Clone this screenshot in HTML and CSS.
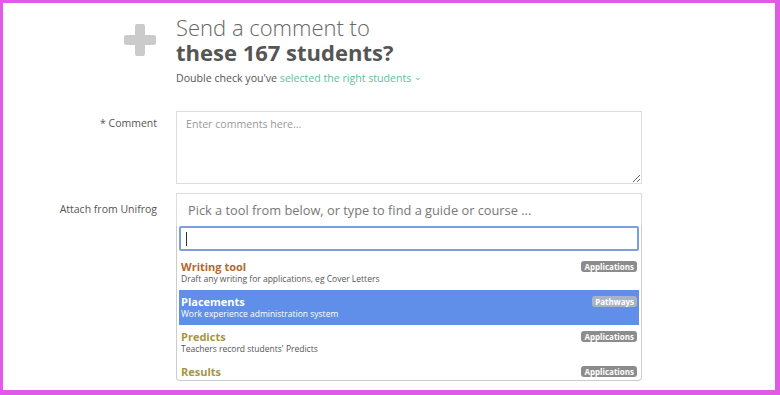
FILE: index.html
```html
<!DOCTYPE html>
<html>
<head>
<meta charset="utf-8">
<link rel="stylesheet" href="styles.css">
</head>
<body>
<div class="frame">
  <div class="page">
    <div class="row header">
      <div class="label icon-cell">
        <svg class="plus" width="32" height="32" viewBox="0 0 32 32"><path d="M16 3v26M3 16h26" stroke="#cbcbcb" stroke-width="10" stroke-linecap="round"/></svg>
      </div>
      <div class="field">
        <h1 class="title"><span class="light">Send a comment to</span><br><strong>these 167 students?</strong></h1>
        <p class="sub">Double check you've <a class="link">selected the right students <span class="caret">&#8964;</span></a></p>
      </div>
    </div>
    <div class="row comment-row">
      <label class="label">* Comment</label>
      <textarea class="textarea" placeholder="Enter comments here..."></textarea>
    </div>
    <div class="row attach-row">
      <label class="label">Attach from Unifrog</label>
      <div class="chosen">
        <div class="chosen-single">Pick a tool from below, or type to find a guide or course ...</div>
        <div class="drop">
          <div class="search"><span class="cursor"></span></div>
          <ul class="results">
            <li class="item"><div class="item-head"><span class="name orange">Writing tool</span><span class="badge">Applications</span></div><div class="desc">Draft any writing for applications, eg Cover Letters</div></li>
            <li class="item active"><div class="item-head"><span class="name">Placements</span><span class="badge">Pathways</span></div><div class="desc">Work experience administration system</div></li>
            <li class="item"><div class="item-head"><span class="name olive">Predicts</span><span class="badge">Applications</span></div><div class="desc">Teachers record students' Predicts</div></li>
            <li class="item last"><div class="item-head"><span class="name olive">Results</span><span class="badge">Applications</span></div></li>
          </ul>
        </div>
      </div>
    </div>
  </div>
</div>
</body>
</html>
```
FILE: styles.css
```css
* { box-sizing: border-box; }
html, body { margin: 0; padding: 0; }
body { font-family: "Open Sans", "Liberation Sans", sans-serif; color: #555; }
.frame {
  width: 780px; height: 395px; overflow: hidden;
  border-style: solid; border-color: #e05ae6;
  border-width: 3px 5px 5px 3px;
  background: #fff;
}
.page { padding-top: 12px; display: flex; flex-direction: column; }
.row { display: grid; grid-template-columns: 154px 466px; column-gap: 19px; }
.label { text-align: right; font-size: 10.5px; color: #555; }
.icon-cell { display: flex; justify-content: flex-end; padding-top: 9px; padding-right: 1px; }
.title { margin: 0; font-size: 22px; line-height: 25px; font-weight: 400; color: #666; }
.title .light { font-weight: 300; }
.title strong { font-weight: 700; color: #555; }
.sub { margin: 6px 0 0; font-size: 10.6px; color: #555; }
.link { color: #5fbf9c; }
.caret { font-size: 9px; position: relative; top: -2px; }
.comment-row { margin-top: 26px; }
.comment-row .label { padding-top: 5px; }
.textarea {
  display: block; width: 466px; height: 73px; resize: vertical;
  border: 1px solid #ddd; padding: 5px 9px; margin: 0;
  font-family: inherit; font-size: 10.6px; color: #555;
}
.textarea::placeholder { color: #999; }
.attach-row { margin-top: 9px; }
.attach-row .label { padding-top: 9px; }
.chosen-single {
  height: 33px; border: 1px solid #ddd; border-bottom: none;
  padding: 7px 11px 0; font-size: 12.8px; color: #777; white-space: nowrap;
}
.drop { border: 1px solid #ccc; border-top: none; border-radius: 0 0 4px 4px; padding: 0 2px 0; }
.search { height: 25px; border: 2px solid #7a9fd9; border-radius: 2px; position: relative; }
.cursor { position: absolute; left: 5px; top: 4px; width: 1px; height: 14px; background: #333; }
.results { list-style: none; margin: 4px 0 0; padding: 0; height: 125px; overflow: hidden; }
.item { height: 35px; padding: 5px 2px 0; }
.item-head { display: flex; justify-content: space-between; align-items: center; height: 13px; }
.name { font-size: 11px; font-weight: 700; color: #777; }
.orange { color: #b2682e; }
.olive { color: #a59645; }
.badge {
  background: #8c8c8c; color: #fff; font-size: 8px; font-weight: 700;
  border-radius: 3px; padding: 0 3px; line-height: 11px;
}
.desc { font-size: 8.5px; color: #555; margin-top: 0; line-height: 12px; }
.item.active { background: #5f8fe8; }
.item.active .name, .item.active .desc { color: #fff; }
.item.active .badge { background: #a9b3c8; }
.item.last { height: 20px; }
```
